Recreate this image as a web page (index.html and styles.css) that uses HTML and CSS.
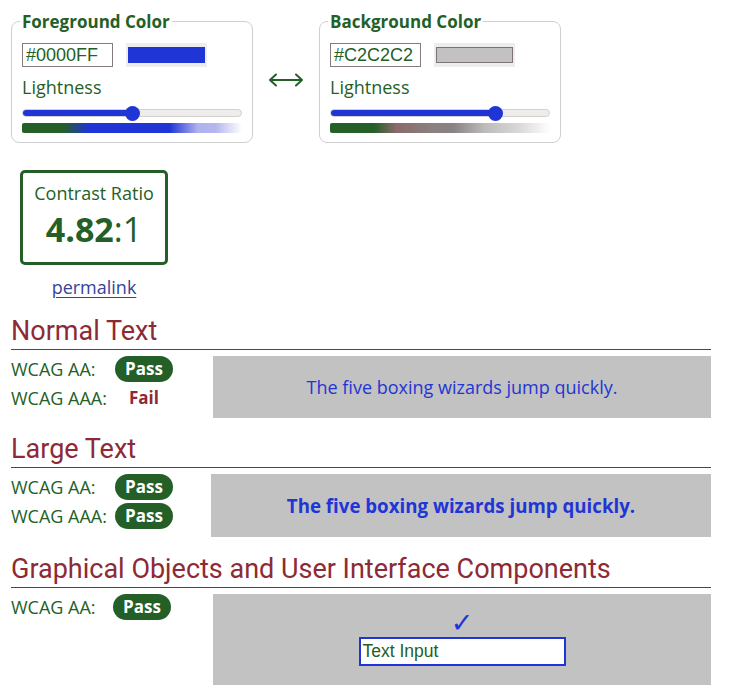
FILE: index.html
```html
<!DOCTYPE html>
<html lang="en">
<head>
<meta charset="utf-8">
<title>Contrast Checker</title>
<link rel="stylesheet" href="styles.css">
</head>
<body>
<div class="page">
  <div class="pickers">
    <fieldset class="picker">
      <legend>Foreground Color</legend>
      <div class="hexrow">
        <input class="hex" type="text" value="#0000FF">
        <span class="swatch"><span class="swatch-fill fg"></span></span>
      </div>
      <label class="lbl">Lightness</label>
      <div class="slider">
        <div class="track"><div class="fill" style="width:50%"></div></div>
        <div class="thumb" style="left:50%"></div>
      </div>
      <div class="grad grad-fg"></div>
    </fieldset>
    <div class="swap">
      <svg width="36" height="14" viewBox="0 0 36 14" aria-hidden="true">
        <path d="M2 7H34M8 1.5L2 7L8 12.5M28 1.5L34 7L28 12.5" fill="none" stroke="#245f27" stroke-width="2" stroke-linecap="round" stroke-linejoin="round"/>
      </svg>
    </div>
    <fieldset class="picker">
      <legend>Background Color</legend>
      <div class="hexrow">
        <input class="hex" type="text" value="#C2C2C2">
        <span class="swatch"><span class="swatch-fill bg"></span></span>
      </div>
      <label class="lbl">Lightness</label>
      <div class="slider">
        <div class="track"><div class="fill" style="width:75%"></div></div>
        <div class="thumb" style="left:75%"></div>
      </div>
      <div class="grad grad-bg"></div>
    </fieldset>
  </div>

  <div class="ratio-col">
    <div class="ratio-box">
      <div class="ratio-title">Contrast Ratio</div>
      <div class="ratio-value"><b>4.82</b>:1</div>
    </div>
    <a class="permalink" href="#">permalink</a>
  </div>

  <section class="sec sec-normal">
    <h2>Normal Text</h2>
    <div class="row">
      <div class="results">
        <span class="lab">WCAG AA:</span><span class="badge">Pass</span>
        <span class="lab">WCAG AAA:</span><span class="fail">Fail</span>
      </div>
      <div class="sample sample-normal">The five boxing wizards jump quickly.</div>
    </div>
  </section>

  <section class="sec sec-large">
    <h2>Large Text</h2>
    <div class="row">
      <div class="results results-large">
        <span class="lab">WCAG AA:</span><span class="badge">Pass</span>
        <span class="lab">WCAG AAA:</span><span class="badge">Pass</span>
      </div>
      <div class="sample sample-large">The five boxing wizards jump quickly.</div>
    </div>
  </section>

  <section class="sec sec-ui">
    <h2>Graphical Objects and User Interface Components</h2>
    <div class="row">
      <div class="results results-ui">
        <span class="lab">WCAG AA:</span><span class="badge">Pass</span>
      </div>
      <div class="sample sample-ui">
        <span class="check">✓</span>
        <span class="text-input">Text Input</span>
      </div>
    </div>
  </section>
</div>
</body>
</html>
```

FILE: styles.css
```css
* { box-sizing: border-box; }

body {
  margin: 0;
  font-family: "Open Sans", "DejaVu Sans", sans-serif;
  color: #245f27;
  background: #fff;
}

.page {
  width: 700px;
  margin-left: 11px;
  padding-top: 10px;
}

.pickers {
  display: flex;
  align-items: flex-start;
}

.picker {
  width: 242px;
  margin: 0;
  padding: 0 10px 9px 10px;
  border: 1px solid #cfcfcf;
  border-radius: 8px;
  min-width: 0;
}

.picker legend {
  font-weight: 700;
  font-size: 17px;
  line-height: 23px;
  padding: 0 2px;
  margin-left: -2px;
}

.hexrow {
  display: flex;
  align-items: center;
  margin-top: 10px;
}

.hex {
  width: 91px;
  height: 24px;
  margin: 0;
  border: 1px solid #857b7c;
  padding: 0 3px;
  font-family: "Liberation Sans", Arial, sans-serif;
  font-size: 18px;
  color: #245f27;
  background: #fff;
}

.swatch {
  display: block;
  width: 81px;
  height: 24px;
  margin-left: 13px;
  padding: 4px 2px;
  background: #efedeb;
}

.swatch-fill {
  display: block;
  width: 100%;
  height: 16px;
}

.swatch-fill.fg { background: #1f35d5; }
.swatch-fill.bg { background: #c2c2c2; border: 1px solid #7c7474; }

.lbl {
  display: block;
  font-size: 18px;
  line-height: 23px;
  margin-top: 9px;
}

.slider {
  position: relative;
  height: 14px;
  margin-top: 7px;
}

.track {
  position: relative;
  top: 3px;
  height: 8px;
  border-radius: 4px;
  background: #efedeb;
  border: 1px solid #d4d1ce;
  overflow: hidden;
}

.fill {
  height: 100%;
  background: #1f35d5;
}

.thumb {
  position: absolute;
  top: 0;
  width: 15px;
  height: 15px;
  margin-left: -7px;
  border-radius: 50%;
  background: #1f35d5;
}

.grad {
  height: 10px;
  margin-top: 3px;
  border-radius: 2px;
}

.grad-fg {
  background: linear-gradient(to right, #245f27 0, #245f27 19%, #1f35d5 30%, #1f35d5 67%, #b0b2ee 80%, #b4b6ee 88%, #ffffff 100%);
}

.grad-bg {
  background: linear-gradient(to right, #245f27 0, #245f27 20%, #8a6a6a 30%, #8a8282 48%, #8a8282 56%, #bdbaba 70%, #d8d6d6 85%, #ffffff 100%);
}

.swap {
  width: 66px;
  display: flex;
  justify-content: center;
  padding-top: 63px;
}

.swap svg { display: block; }

.ratio-col {
  width: 148px;
  margin: 27px 0 0 9px;
  display: flex;
  flex-direction: column;
  align-items: center;
}

.ratio-box {
  width: 148px;
  height: 95px;
  border: 3px solid #245f27;
  border-radius: 5px;
  text-align: center;
  padding-top: 8px;
}

.ratio-title {
  font-size: 18px;
  line-height: 24px;
}

.ratio-value {
  font-size: 34px;
  line-height: 40px;
  margin-top: 4px;
}

.ratio-value b { font-weight: 700; }

.permalink {
  margin-top: 10px;
  font-size: 18px;
  line-height: 24px;
  color: #34449a;
  text-decoration: underline;
  text-decoration-color: #245f27;
  text-underline-offset: 3px;
}

.sec h2 {
  margin: 15px 0 0 0;
  font-family: Roboto, "Liberation Sans", sans-serif;
  font-weight: 400;
  font-size: 27px;
  line-height: 32px;
  color: #8d2a35;
  padding-bottom: 2px;
  border-bottom: 1px solid #8d2a35;
}

.sec-normal h2 { margin-top: 16px; }
.sec-ui h2 { margin-top: 16px; }

.row {
  display: flex;
  margin-top: 6px;
}

.results {
  width: 202px;
  flex: none;
  display: grid;
  grid-template-columns: 104px 58px;
  grid-auto-rows: 26px;
  row-gap: 3px;
  align-content: start;
  font-size: 18px;
}

.results-large { width: 200px; }
.results-ui { width: 202px; grid-template-columns: 102px 58px; }

.lab {
  line-height: 26px;
  white-space: nowrap;
}

.badge {
  width: 58px;
  height: 26px;
  border-radius: 13px;
  background: #245f27;
  color: #fff;
  font-size: 17px;
  font-weight: 700;
  line-height: 26px;
  text-align: center;
}

.fail {
  color: #8d2a35;
  font-size: 17px;
  font-weight: 700;
  line-height: 26px;
  text-align: center;
}

.sample {
  flex: 1;
  background: #c2c2c2;
  color: #1f35d5;
  display: flex;
  align-items: center;
  justify-content: center;
}

.sample-normal {
  height: 62px;
  font-size: 18px;
}

.sample-large {
  height: 63px;
  font-size: 18.7px;
  font-weight: 700;
}

.sample-ui {
  height: 91px;
  flex-direction: column;
  justify-content: flex-start;
  padding-top: 15px;
}

.check {
  font-family: "DejaVu Sans", sans-serif;
  font-size: 27px;
  line-height: 28px;
  color: #1f35d5;
}

.text-input {
  display: block;
  width: 207px;
  height: 29px;
  margin-top: 0;
  border: 2px solid #1f35d5;
  background: #fff;
  color: #245f27;
  font-family: "Liberation Sans", Arial, sans-serif;
  font-size: 17.5px;
  line-height: 25px;
  padding-left: 2px;
}
```
